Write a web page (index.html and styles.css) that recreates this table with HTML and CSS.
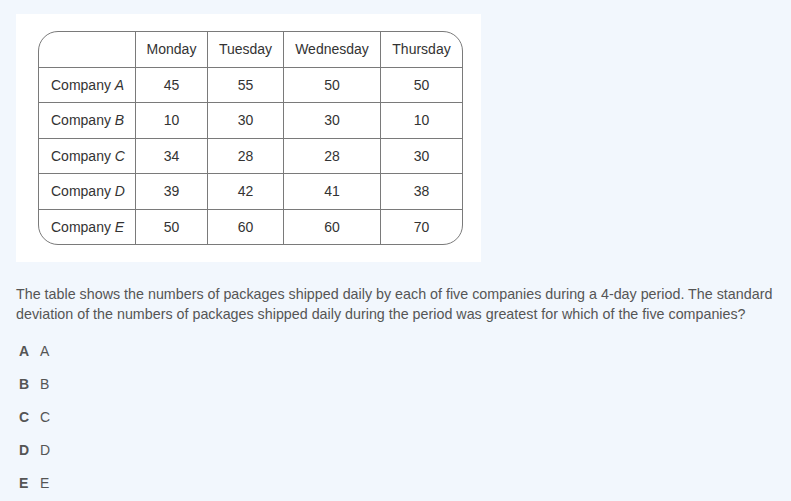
FILE: index.html
```html
<!DOCTYPE html>
<html>
<head>
<meta charset="utf-8">
<link rel="stylesheet" href="styles.css">
</head>
<body>
<div class="page">
  <div class="figure">
    <table class="data">
      <thead>
        <tr><th class="corner"></th><th>Monday</th><th>Tuesday</th><th>Wednesday</th><th>Thursday</th></tr>
      </thead>
      <tbody>
        <tr><td class="name">Company <i>A</i></td><td>45</td><td>55</td><td>50</td><td>50</td></tr>
        <tr><td class="name">Company <i>B</i></td><td>10</td><td>30</td><td>30</td><td>10</td></tr>
        <tr><td class="name">Company <i>C</i></td><td>34</td><td>28</td><td>28</td><td>30</td></tr>
        <tr><td class="name">Company <i>D</i></td><td>39</td><td>42</td><td>41</td><td>38</td></tr>
        <tr><td class="name">Company <i>E</i></td><td>50</td><td>60</td><td>60</td><td>70</td></tr>
      </tbody>
    </table>
  </div>
  <p class="question">The table shows the numbers of packages shipped daily by each of five companies during a 4-day period. The standard deviation of the numbers of packages shipped daily during the period was greatest for which of the five companies?</p>
  <ul class="options">
    <li><b>A</b><span>A</span></li>
    <li><b>B</b><span>B</span></li>
    <li><b>C</b><span>C</span></li>
    <li><b>D</b><span>D</span></li>
    <li><b>E</b><span>E</span></li>
  </ul>
</div>
</body>
</html>
```
FILE: styles.css
```css
html, body {
  margin: 0;
  padding: 0;
  background: #f2f7fd;
  font-family: "Liberation Sans", Arial, sans-serif;
}
.page {
  padding: 14px 16px 0 16px;
}
.figure {
  background: #ffffff;
  width: 425px;
  padding: 17px 18px 17px 22px;
}
.data {
  border-collapse: separate;
  border-spacing: 0;
  border: 1px solid #7a7a7a;
  border-radius: 20px;
  font-size: 14px;
  color: #333;
  width: 425px;
}
.data th, .data td {
  border-right: 1px solid #7a7a7a;
  border-bottom: 1px solid #7a7a7a;
  height: 34.5px;
  padding: 0;
  text-align: center;
  font-weight: normal;
}
.data tr > :last-child { border-right: none; }
.data tbody tr:last-child td { border-bottom: none; }
.data th:nth-child(1) { width: 96px; }
.data th:nth-child(2) { width: 71px; }
.data th:nth-child(3) { width: 75px; }
.data th:nth-child(4) { width: 96px; }
.data td.name {
  text-align: left;
  padding-left: 12px;
}
.question {
  margin: 22px 0 0 0;
  font-size: 14.3px;
  line-height: 20px;
  color: #555;
}
.options {
  list-style: none;
  margin: 19px 0 0 0;
  padding: 0 0 0 3px;
  font-size: 14px;
  color: #555;
}
.options li {
  height: 33px;
  line-height: 17px;
  display: flex;
  gap: 11px;
}
.options b {
  width: 10px;
  font-size: 14px;
  color: #555;
}
```
